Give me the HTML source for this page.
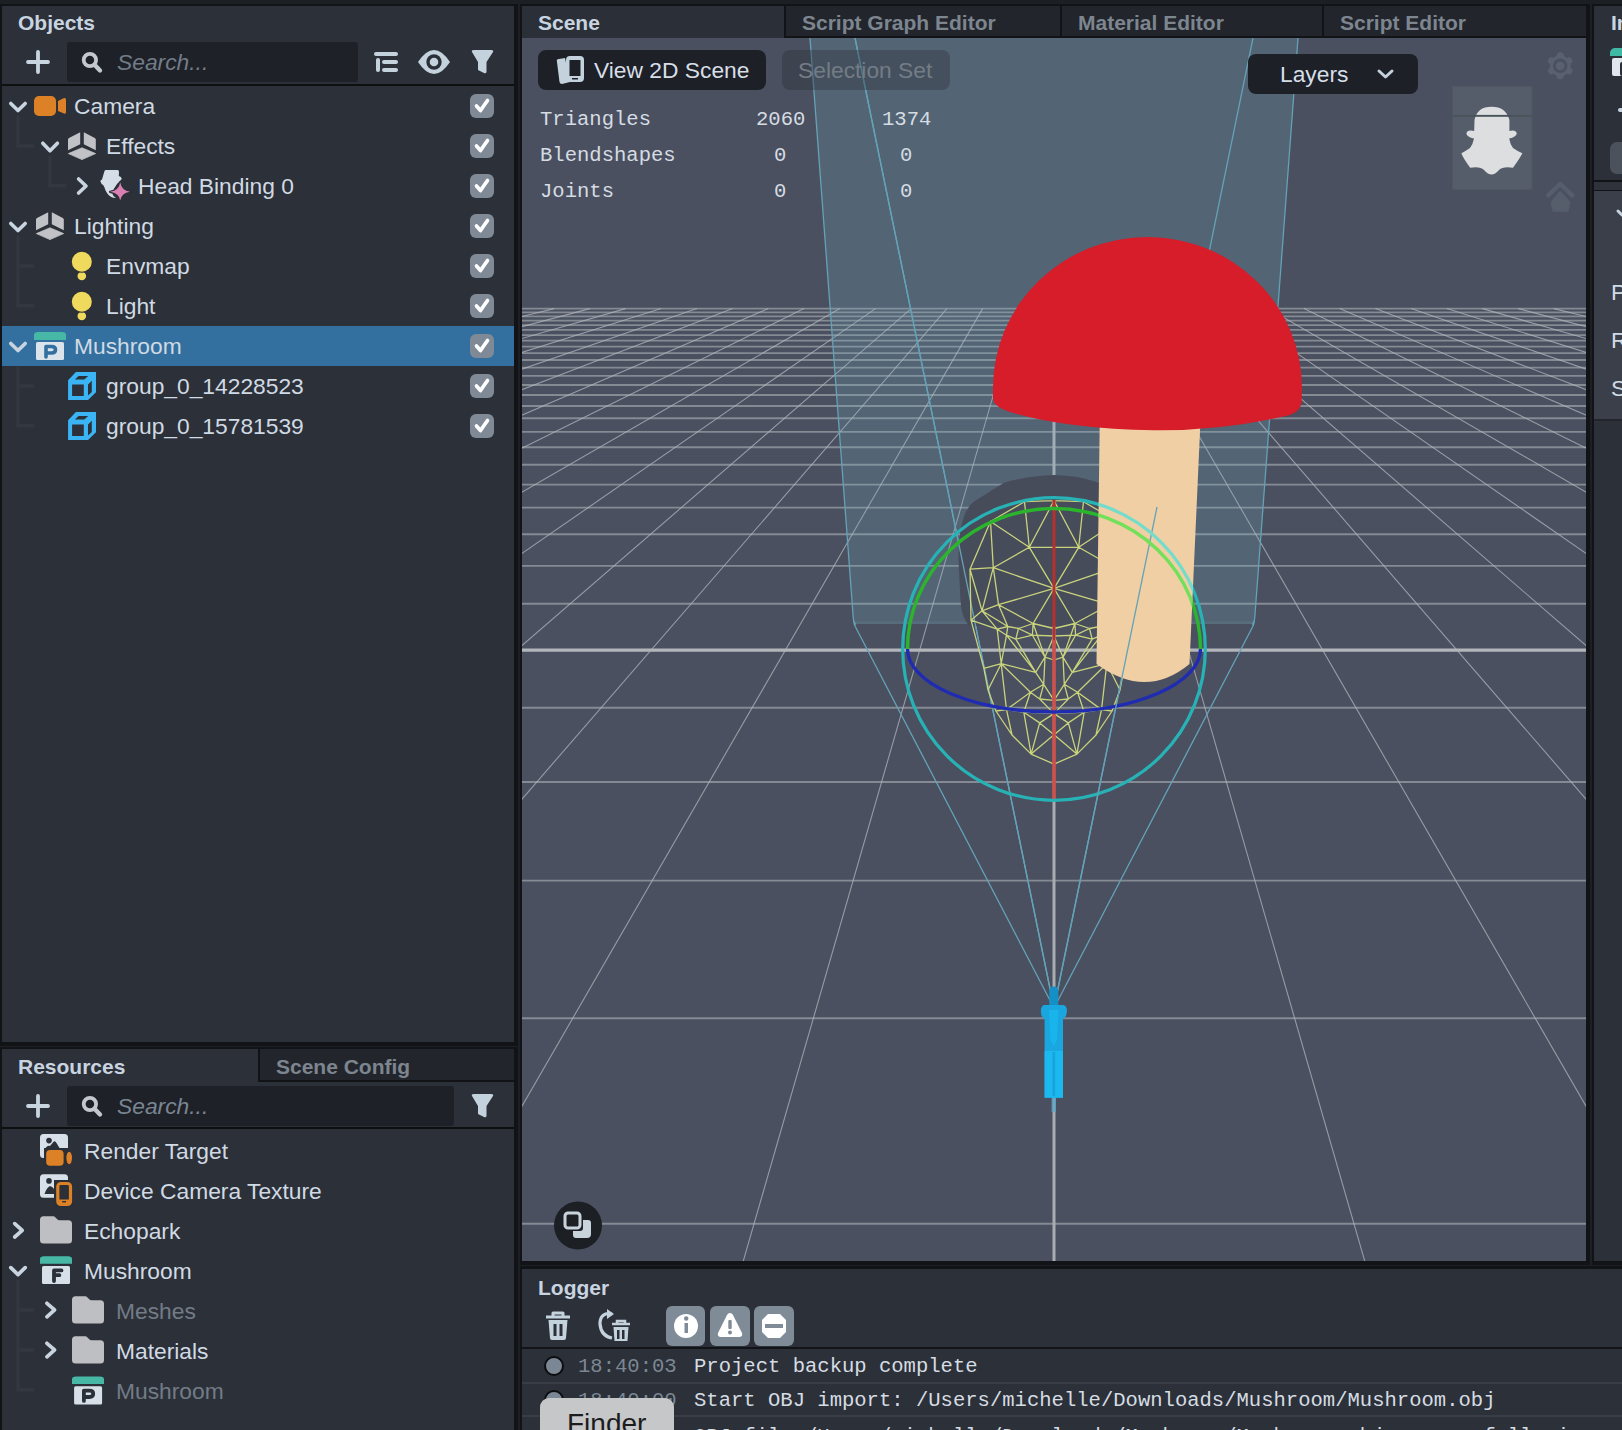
<!DOCTYPE html>
<html><head><meta charset="utf-8">
<style>
*{box-sizing:border-box;margin:0;padding:0}
html,body{width:1622px;height:1430px;overflow:hidden;background:#1c1f23;font-family:"Liberation Sans",sans-serif;}
.abs{position:absolute}
.panel{position:absolute;background:#2c3038;}
.bd{position:absolute;background:#111316}
.t{position:absolute;white-space:pre;color:#d0dae4;font-size:22.8px;line-height:26px}
.hdr{position:absolute;white-space:pre;color:#c8d4e0;font-size:21px;font-weight:bold;line-height:24px;margin-top:1px}
.dim{color:#727c87 !important}
.mono{font-family:"Liberation Mono",monospace}
.cb{position:absolute;left:470px;width:24px;height:24px;border-radius:6px;background:#7f8a96}
svg{position:absolute;overflow:visible}
</style></head><body>

<!-- ===== Objects panel ===== -->
<div class="bd" style="left:0;top:4px;width:518px;height:1042px"></div>
<div class="panel" style="left:2px;top:6px;width:512px;height:1036px"></div>
<div class="hdr" style="left:18px;top:10px">Objects</div>
<!-- toolbar -->
<svg style="left:0;top:0" width="518" height="90">
  <path d="M38,52 V72 M28,62 H48" stroke="#c8d5e0" stroke-width="3.8" stroke-linecap="round"/>
</svg>
<div class="abs" style="left:67px;top:42px;width:291px;height:40px;background:#1e2128;border-radius:3px"></div>
<svg style="left:0;top:0" width="518" height="90">
  <circle cx="89.9" cy="60" r="6.2" fill="none" stroke="#c2c8ce" stroke-width="3.8"/>
  <path d="M95,65.2 L100,70.4" stroke="#c2c8ce" stroke-width="4.4" stroke-linecap="round"/>
  <!-- list icon -->
  <rect x="374" y="52" width="24" height="4" rx="2" fill="#c4d2de"/>
  <rect x="376" y="58" width="4" height="14" rx="2" fill="#c4d2de"/>
  <rect x="382" y="60" width="16" height="4" rx="2" fill="#c4d2de"/>
  <rect x="382" y="68" width="16" height="4" rx="2" fill="#c4d2de"/>
  <!-- eye -->
  <path d="M418,62 Q434,38 450,62 Q434,86 418,62 Z" fill="#c4d2de"/>
  <circle cx="434" cy="62" r="7.7" fill="#2b2f37"/>
  <circle cx="434" cy="62" r="4.3" fill="#c4d2de"/>
  <!-- filter -->
  <path d="M472,52 Q471,50 474,50 L491,50 Q494,50 493,52 L486.5,62 L486.5,72 Q486,74 484,73 L478,70 L478,62 Z" fill="#c4d2de"/>
</svg>
<div class="t dim" style="left:117px;top:49px;font-style:italic;color:#7a8692">Search...</div>
<div class="bd" style="left:2px;top:84px;width:512px;height:2px;background:#0d0f11"></div>

<!-- selected row -->
<div class="abs" style="left:2px;top:326px;width:512px;height:40px;background:#33709f"></div>

<!-- tree lines -->
<svg style="left:0;top:0" width="518" height="460">
  <g stroke="#33373f" stroke-width="3.4" fill="none" stroke-linecap="round">
    <path d="M18,117 V146 H33"/>
    <path d="M50,157 V185.7 H65"/>
    <path d="M18,237 V305.8 H33 M18,266 H33"/>
    <path d="M18,368 V425.8 H33 M18,386 H33"/>
  </g>
</svg>

<!-- rows -->
<svg style="left:0;top:0" width="518" height="460">
  <g stroke="#c8d5e0" stroke-width="3.6" fill="none" stroke-linecap="round" stroke-linejoin="round">
    <path d="M10.8,103.4 L18,110.6 L25.2,103.4"/>
    <path d="M42.8,143.2 L50,150.8 L57.4,143.2"/>
    <path d="M78.6,179 L86,186 L78.6,193"/>
    <path d="M10.8,223.4 L18,230.6 L25.2,223.4"/>
    <path d="M10.8,343.4 L18,350.6 L25.2,343.4"/>
  </g>
  <!-- camera icon -->
  <rect x="34" y="96" width="22" height="20" rx="5" fill="#dd8127"/>
  <path d="M58,101 L64,98 Q66,97.5 66,100 L66,112 Q66,114.5 64,113.5 L58,111 Z" fill="#dd8127"/>
  <!-- effects icon -->
  <path d="M68,139.5 Q68,138.5 69,138 L80.2,132.2 L80.2,144.3 L68,150.2 Z" fill="#c0c2c6" transform="translate(0,0)"/><path d="M95.8,139.5 Q95.8,138.5 94.8,138 L83.8,132.2 L83.8,144.3 L95.8,150.2 Z" fill="#c0c2c6" transform="translate(0,0)"/><path d="M68.4,153.6 L82,147.8 L95.6,153.6 L82,159.6 Z" fill="#c0c2c6" stroke="#c0c2c6" stroke-width="0.8" stroke-linejoin="round" transform="translate(0,0)"/>
  <!-- lighting icon -->
  <path d="M68,139.5 Q68,138.5 69,138 L80.2,132.2 L80.2,144.3 L68,150.2 Z" fill="#c0c2c6" transform="translate(-32,80)"/><path d="M95.8,139.5 Q95.8,138.5 94.8,138 L83.8,132.2 L83.8,144.3 L95.8,150.2 Z" fill="#c0c2c6" transform="translate(-32,80)"/><path d="M68.4,153.6 L82,147.8 L95.6,153.6 L82,159.6 Z" fill="#c0c2c6" stroke="#c0c2c6" stroke-width="0.8" stroke-linejoin="round" transform="translate(-32,80)"/>
  <!-- head binding icon -->
  <path d="M104.5,171 Q104.8,170 106,170 L117.5,170 Q119,170 119,172 L118.8,176 Q121.5,176.5 121.8,179 L117,184 Q113.5,188 112.5,194 Q113,196.5 116,198 Q110,198 107,193 Q105,190 104.5,187.5 L103.2,185 Q101,184 101,182.5 L100.3,181.2 Q100.5,180 102,179.5 Q103,176 104.5,171 Z" fill="#d5dee7"/>
  <path d="M120.2,182.3 Q121.5,190.5 130,191.8 Q121.5,193 120.2,200.5 Q119,193 110,191.8 Q119,190.5 120.2,182.3 Z" fill="#d97fb3" stroke="#2b2f37" stroke-width="2.2" paint-order="stroke" stroke-linejoin="round"/>
  <!-- bulbs -->
  <circle cx="81.8" cy="276" r="4.3" fill="#f0da5e"/>
  <circle cx="81.8" cy="261.8" r="10" fill="#f0da5e" stroke="#2b2f37" stroke-width="1.8" paint-order="stroke"/>
  <circle cx="81.8" cy="316" r="4.3" fill="#f0da5e"/>
  <circle cx="81.8" cy="301.8" r="10" fill="#f0da5e" stroke="#2b2f37" stroke-width="1.8" paint-order="stroke"/>
  <!-- prefab icon -->
  <path d="M34,340 L34,335 Q34,332 38,332 L62,332 Q66,332 66,335 L66,340 Z" fill="#46b8a5"/>
  <rect x="36" y="342" width="28" height="18" rx="1.5" fill="#dce4eb"/>
  <path d="M46,357 V346.5 H51.5 Q55.5,346.5 55.5,349.8 Q55.5,353 51.5,353 H46.5" fill="none" stroke="#33709f" stroke-width="3.6" stroke-linecap="round" stroke-linejoin="round"/>
  <!-- mesh cubes -->
  <path d="M68.1,380.2 L75.9,372 L96,372 L96,392.3 L88,400 L68.1,400 Z M72.1,384.4 L72.1,395.9 L83.8,395.9 L83.8,384.4 Z M74.8,379.6 L84.3,379.6 L88.2,376.1 L78.6,376.1 Z M88,384.4 L88,395.6 L91.8,392 L91.8,380.8 Z M68.1,420.2 L75.9,412 L96,412 L96,432.3 L88,440 L68.1,440 Z M72.1,424.4 L72.1,435.9 L83.8,435.9 L83.8,424.4 Z M74.8,419.6 L84.3,419.6 L88.2,416.1 L78.6,416.1 Z M88,424.4 L88,435.6 L91.8,432 L91.8,420.8 Z" fill="#3ab4f5" fill-rule="evenodd"/>
</svg>
<div class="t" style="left:74px;top:93px">Camera</div>
<div class="t" style="left:106px;top:133px">Effects</div>
<div class="t" style="left:138px;top:173px">Head Binding 0</div>
<div class="t" style="left:74px;top:213px">Lighting</div>
<div class="t" style="left:106px;top:253px">Envmap</div>
<div class="t" style="left:106px;top:293px">Light</div>
<div class="t" style="left:74px;top:333px">Mushroom</div>
<div class="t" style="left:106px;top:373px">group_0_14228523</div>
<div class="t" style="left:106px;top:413px">group_0_15781539</div>
<!-- checkboxes -->
<div class="cb" style="top:94px"></div>
<div class="cb" style="top:134px"></div>
<div class="cb" style="top:174px"></div>
<div class="cb" style="top:214px"></div>
<div class="cb" style="top:254px"></div>
<div class="cb" style="top:294px"></div>
<div class="cb" style="top:334px"></div>
<div class="cb" style="top:374px"></div>
<div class="cb" style="top:414px"></div>
<svg style="left:0;top:0" width="518" height="460">
  <g stroke="#ffffff" stroke-width="3.7" fill="none" stroke-linecap="round" stroke-linejoin="round">
    <path d="M476.5,106 L480.5,110.5 L487.5,100.5"/>
    <path d="M476.5,146 L480.5,150.5 L487.5,140.5"/>
    <path d="M476.5,186 L480.5,190.5 L487.5,180.5"/>
    <path d="M476.5,226 L480.5,230.5 L487.5,220.5"/>
    <path d="M476.5,266 L480.5,270.5 L487.5,260.5"/>
    <path d="M476.5,306 L480.5,310.5 L487.5,300.5"/>
    <path d="M476.5,346 L480.5,350.5 L487.5,340.5"/>
    <path d="M476.5,386 L480.5,390.5 L487.5,380.5"/>
    <path d="M476.5,426 L480.5,430.5 L487.5,420.5"/>
  </g>
</svg>

<!-- ===== Resources panel ===== -->
<div class="bd" style="left:0;top:1047px;width:518px;height:400px"></div>
<div class="panel" style="left:2px;top:1049px;width:512px;height:390px"></div>
<div class="abs" style="left:260px;top:1049px;width:254px;height:33px;background:#22252c"></div>
<div class="bd" style="left:258px;top:1049px;width:2px;height:33px"></div>
<div class="bd" style="left:260px;top:1080px;width:254px;height:2px"></div>
<div class="hdr" style="left:18px;top:1054px">Resources</div>
<div class="hdr" style="left:276px;top:1054px;color:#7d858f">Scene Config</div>
<div class="abs" style="left:67px;top:1086px;width:387px;height:40px;background:#1e2128;border-radius:3px"></div>
<div class="t" style="left:117px;top:1093px;font-style:italic;color:#7a8692">Search...</div>
<div class="bd" style="left:2px;top:1127px;width:512px;height:2px;background:#0d0f11"></div>
<svg style="left:0;top:1040px" width="518" height="390">
  <g transform="translate(0,-1040)">
  <path d="M38,1096 V1116 M28,1106 H48" stroke="#c8d5e0" stroke-width="3.8" stroke-linecap="round"/>
  <circle cx="89.9" cy="1104" r="6.2" fill="none" stroke="#c2c8ce" stroke-width="3.8"/>
  <path d="M95,1109.2 L100,1114.4" stroke="#c2c8ce" stroke-width="4.4" stroke-linecap="round"/>
  <path d="M472,1096 Q471,1094 474,1094 L491,1094 Q494,1094 493,1096 L486.5,1106 L486.5,1116 Q486,1118 484,1117 L478,1114 L478,1106 Z" fill="#c4d2de"/>
  <!-- tree lines -->
  <g stroke="#33373f" stroke-width="3.4" fill="none" stroke-linecap="round">
    <path d="M18,1281 V1389.7 H33 M18,1310 H33 M18,1350 H33"/>
  </g>
  <!-- chevrons -->
  <g stroke="#c8d5e0" stroke-width="3.7" fill="none" stroke-linecap="round" stroke-linejoin="round">
    <path d="M14.7,1223.6 L22.2,1230.4 L14.7,1237"/>
    <path d="M10.8,1267.6 L18,1274.6 L25.2,1267.6"/>
    <path d="M46.9,1303.3 L54.6,1309.8 L46.9,1316.8"/>
    <path d="M46.9,1343.3 L54.6,1349.8 L46.9,1356.8"/>
  </g>
  <!-- render target icon -->
  <path d="M43.5,1134 L64.5,1134 Q68,1134 68,1137.5 L68,1148 L44,1148 L44,1158 L43.5,1158 Q40,1158 40,1154.5 L40,1137.5 Q40,1134 43.5,1134 Z" fill="#d7e0e8"/>
  <circle cx="49" cy="1140.6" r="2.8" fill="#2b2f37"/>
  <path d="M44.5,1150 Q47,1145 50,1146 L52.5,1143 Q54.6,1139.5 56.5,1143 L59.5,1148 L59.5,1150 Z" fill="#2b2f37"/>
  <rect x="44.2" y="1148.2" width="21.4" height="19.6" rx="5" fill="#2b2f37"/>
  <rect x="46.2" y="1150.1" width="17.4" height="15.7" rx="3.8" fill="#dd8127"/>
  <ellipse cx="69.2" cy="1158" rx="3.6" ry="7" fill="#2b2f37"/>
  <ellipse cx="69.2" cy="1158" rx="2.8" ry="6.2" fill="#dd8127"/>
  <!-- device camera texture icon -->
  <path d="M43.5,1174.2 L64.5,1174.2 Q68,1174.2 68,1177.7 L68,1180 L54,1180 L54,1197.7 L43.5,1197.7 Q40,1197.7 40,1194.2 L40,1177.7 Q40,1174.2 43.5,1174.2 Z" fill="#d7e0e8"/>
  <circle cx="49" cy="1180.9" r="2.8" fill="#2b2f37"/>
  <path d="M44.5,1194 Q47,1187 50,1186 Q53,1187 54,1189 L54,1194 Z" fill="#2b2f37"/>
  <rect x="54.3" y="1180" width="19.7" height="28" rx="5" fill="#2b2f37"/>
  <rect x="57.8" y="1183.5" width="12.7" height="21" rx="3" fill="none" stroke="#dd8127" stroke-width="3.2"/>
  <path d="M57.8,1199.5 H70.5 V1201 Q70.5,1204.5 67,1204.5 H61.3 Q57.8,1204.5 57.8,1201 Z" fill="#dd8127"/>
  <rect x="62.2" y="1201" width="3.8" height="1.4" fill="#2b2f37"/>
  <!-- folders -->
  <g fill="#bdbfc3">
    <path d="M40,1219.8 Q40,1216.3 43.5,1216.3 L53,1216.3 Q54.5,1216.3 55.5,1217.5 L57,1219 Q58,1220.3 59.5,1220.3 L68.5,1220.3 Q72,1220.3 72,1223.8 L72,1240.1 Q72,1243.6 68.5,1243.6 L43.5,1243.6 Q40,1243.6 40,1240.1 Z"/>
    <path d="M40,1219.8 Q40,1216.3 43.5,1216.3 L53,1216.3 Q54.5,1216.3 55.5,1217.5 L57,1219 Q58,1220.3 59.5,1220.3 L68.5,1220.3 Q72,1220.3 72,1223.8 L72,1240.1 Q72,1243.6 68.5,1243.6 L43.5,1243.6 Q40,1243.6 40,1240.1 Z" transform="translate(32,80)"/>
    <path d="M40,1219.8 Q40,1216.3 43.5,1216.3 L53,1216.3 Q54.5,1216.3 55.5,1217.5 L57,1219 Q58,1220.3 59.5,1220.3 L68.5,1220.3 Q72,1220.3 72,1223.8 L72,1240.1 Q72,1243.6 68.5,1243.6 L43.5,1243.6 Q40,1243.6 40,1240.1 Z" transform="translate(32,120)"/>
  </g>
  <!-- mushroom F icon -->
  <path d="M40,1263.8 L40,1259 Q40,1256.2 44,1256.2 L68,1256.2 Q72,1256.2 72,1259 L72,1263.8 Z" fill="#46b8a5"/>
  <rect x="42" y="1266" width="28" height="18.1" rx="1.5" fill="#d7e0e8"/>
  <path d="M61.5,1270.4 H54 V1281 M54,1275.2 H59.4" fill="none" stroke="#2b2f37" stroke-width="3.8" stroke-linecap="round" stroke-linejoin="round"/>
  <!-- mushroom P icon -->
  <path d="M72,1384.1 L72,1379.2 Q72,1376.4 76,1376.4 L100,1376.4 Q104,1376.4 104,1379.2 L104,1384.1 Z" fill="#46b8a5"/>
  <rect x="74.1" y="1386.2" width="28" height="18.2" rx="1.5" fill="#d7e0e8"/>
  <path d="M83.9,1400.9 V1390.6 H89.5 Q93.2,1390.6 93.2,1393.8 Q93.2,1397 89.5,1397 H84.4" fill="none" stroke="#2b2f37" stroke-width="3.8" stroke-linecap="round" stroke-linejoin="round"/>
  </g>
</svg>
<div class="t" style="left:84px;top:1138px">Render Target</div>
<div class="t" style="left:84px;top:1178px">Device Camera Texture</div>
<div class="t" style="left:84px;top:1218px">Echopark</div>
<div class="t" style="left:84px;top:1258px">Mushroom</div>
<div class="t dim" style="left:116px;top:1298px">Meshes</div>
<div class="t" style="left:116px;top:1338px">Materials</div>
<div class="t dim" style="left:116px;top:1378px">Mushroom</div>

<!-- ===== Scene panel ===== -->
<div class="bd" style="left:520px;top:4px;width:1070px;height:1261px"></div>
<div class="panel" style="left:522px;top:6px;width:1064px;height:32px;background:#2b2f37"></div>
<div class="abs" style="left:786px;top:6px;width:800px;height:30px;background:#22252c"></div>
<div class="bd" style="left:784px;top:6px;width:2px;height:32px"></div>
<div class="bd" style="left:1060px;top:6px;width:2px;height:32px"></div>
<div class="bd" style="left:1322px;top:6px;width:2px;height:32px"></div>
<div class="bd" style="left:786px;top:36px;width:800px;height:2px"></div>
<div class="hdr" style="left:538px;top:10px">Scene</div>
<div class="hdr" style="left:802px;top:10px;color:#7d858f">Script Graph Editor</div>
<div class="hdr" style="left:1078px;top:10px;color:#7d858f">Material Editor</div>
<div class="hdr" style="left:1340px;top:10px;color:#7d858f">Script Editor</div>

<svg style="left:0;top:0" width="1622" height="1430">
<defs><clipPath id="vp"><rect x="522" y="38" width="1064" height="1223"/></clipPath></defs>
<g clip-path="url(#vp)">
<rect x="522" y="38" width="1064" height="1223" fill="#4a5060"/>
<line x1="522" y1="1223.7" x2="1586" y2="1223.7" stroke="#858a93" stroke-width="1.9"/>
<line x1="522" y1="1018.2" x2="1586" y2="1018.2" stroke="#858a93" stroke-width="1.9"/>
<line x1="522" y1="880.6" x2="1586" y2="880.6" stroke="#858a93" stroke-width="1.9"/>
<line x1="522" y1="782.0" x2="1586" y2="782.0" stroke="#858a93" stroke-width="1.9"/>
<line x1="522" y1="707.8" x2="1586" y2="707.8" stroke="#858a93" stroke-width="1.9"/>
<line x1="522" y1="603.8" x2="1586" y2="603.8" stroke="#858a93" stroke-width="1.9"/>
<line x1="522" y1="565.9" x2="1586" y2="565.9" stroke="#858a93" stroke-width="1.9"/>
<line x1="522" y1="534.3" x2="1586" y2="534.3" stroke="#858a93" stroke-width="1.9"/>
<line x1="522" y1="507.6" x2="1586" y2="507.6" stroke="#858a93" stroke-width="1.9"/>
<line x1="522" y1="484.6" x2="1586" y2="484.6" stroke="#858a93" stroke-width="1.9"/>
<line x1="522" y1="464.7" x2="1586" y2="464.7" stroke="#858a93" stroke-width="1.9"/>
<line x1="522" y1="447.3" x2="1586" y2="447.3" stroke="#858a93" stroke-width="1.9"/>
<line x1="522" y1="431.9" x2="1586" y2="431.9" stroke="#858a93" stroke-width="1.9"/>
<line x1="522" y1="418.2" x2="1586" y2="418.2" stroke="#858a93" stroke-width="1.9"/>
<line x1="522" y1="406.0" x2="1586" y2="406.0" stroke="#858a93" stroke-width="1.9"/>
<line x1="522" y1="395.0" x2="1586" y2="395.0" stroke="#858a93" stroke-width="1.9"/>
<line x1="522" y1="385.0" x2="1586" y2="385.0" stroke="#858a93" stroke-width="1.9"/>
<line x1="522" y1="375.9" x2="1586" y2="375.9" stroke="#858a93" stroke-width="1.9"/>
<line x1="522" y1="367.6" x2="1586" y2="367.6" stroke="#858a93" stroke-width="1.9"/>
<line x1="522" y1="360.0" x2="1586" y2="360.0" stroke="#858a93" stroke-width="1.9"/>
<line x1="522" y1="353.1" x2="1586" y2="353.1" stroke="#858a93" stroke-width="1.9"/>
<line x1="522" y1="346.6" x2="1586" y2="346.6" stroke="#858a93" stroke-width="1.9"/>
<line x1="522" y1="340.6" x2="1586" y2="340.6" stroke="#858a93" stroke-width="1.9"/>
<line x1="522" y1="335.1" x2="1586" y2="335.1" stroke="#858a93" stroke-width="1.9"/>
<line x1="522" y1="329.9" x2="1586" y2="329.9" stroke="#858a93" stroke-width="1.9"/>
<line x1="522" y1="325.1" x2="1586" y2="325.1" stroke="#858a93" stroke-width="1.9"/>
<line x1="522" y1="320.6" x2="1586" y2="320.6" stroke="#858a93" stroke-width="1.9"/>
<line x1="522" y1="316.4" x2="1586" y2="316.4" stroke="#858a93" stroke-width="1.9"/>
<line x1="522" y1="312.4" x2="1586" y2="312.4" stroke="#858a93" stroke-width="1.9"/>
<line x1="522" y1="308.6" x2="1586" y2="308.6" stroke="#858a93" stroke-width="1.9"/>
<line x1="-374.3" y1="308.6" x2="-25181.2" y2="2456.3" stroke="#b4b8be" stroke-width="1.1" stroke-opacity="0.72"/>
<line x1="-338.6" y1="308.6" x2="-24525.3" y2="2456.3" stroke="#b4b8be" stroke-width="1.1" stroke-opacity="0.72"/>
<line x1="-302.9" y1="308.6" x2="-23869.4" y2="2456.3" stroke="#b4b8be" stroke-width="1.1" stroke-opacity="0.72"/>
<line x1="-267.2" y1="308.6" x2="-23213.5" y2="2456.3" stroke="#b4b8be" stroke-width="1.1" stroke-opacity="0.72"/>
<line x1="-231.5" y1="308.6" x2="-22557.7" y2="2456.3" stroke="#b4b8be" stroke-width="1.1" stroke-opacity="0.72"/>
<line x1="-195.8" y1="308.6" x2="-21901.8" y2="2456.3" stroke="#b4b8be" stroke-width="1.1" stroke-opacity="0.72"/>
<line x1="-160.1" y1="308.6" x2="-21245.9" y2="2456.3" stroke="#b4b8be" stroke-width="1.1" stroke-opacity="0.72"/>
<line x1="-124.4" y1="308.6" x2="-20590.0" y2="2456.3" stroke="#b4b8be" stroke-width="1.1" stroke-opacity="0.72"/>
<line x1="-88.7" y1="308.6" x2="-19934.1" y2="2456.3" stroke="#b4b8be" stroke-width="1.1" stroke-opacity="0.72"/>
<line x1="-52.9" y1="308.6" x2="-19278.3" y2="2456.3" stroke="#b4b8be" stroke-width="1.1" stroke-opacity="0.72"/>
<line x1="-17.2" y1="308.6" x2="-18622.4" y2="2456.3" stroke="#b4b8be" stroke-width="1.1" stroke-opacity="0.72"/>
<line x1="18.5" y1="308.6" x2="-17966.5" y2="2456.3" stroke="#b4b8be" stroke-width="1.1" stroke-opacity="0.72"/>
<line x1="54.2" y1="308.6" x2="-17310.6" y2="2456.3" stroke="#b4b8be" stroke-width="1.1" stroke-opacity="0.72"/>
<line x1="89.9" y1="308.6" x2="-16654.7" y2="2456.3" stroke="#b4b8be" stroke-width="1.1" stroke-opacity="0.72"/>
<line x1="125.6" y1="308.6" x2="-15998.9" y2="2456.3" stroke="#b4b8be" stroke-width="1.1" stroke-opacity="0.72"/>
<line x1="161.3" y1="308.6" x2="-15343.0" y2="2456.3" stroke="#b4b8be" stroke-width="1.1" stroke-opacity="0.72"/>
<line x1="197.0" y1="308.6" x2="-14687.1" y2="2456.3" stroke="#b4b8be" stroke-width="1.1" stroke-opacity="0.72"/>
<line x1="232.7" y1="308.6" x2="-14031.2" y2="2456.3" stroke="#b4b8be" stroke-width="1.1" stroke-opacity="0.72"/>
<line x1="268.4" y1="308.6" x2="-13375.3" y2="2456.3" stroke="#b4b8be" stroke-width="1.1" stroke-opacity="0.72"/>
<line x1="304.1" y1="308.6" x2="-12719.5" y2="2456.3" stroke="#b4b8be" stroke-width="1.1" stroke-opacity="0.72"/>
<line x1="339.8" y1="308.6" x2="-12063.6" y2="2456.3" stroke="#b4b8be" stroke-width="1.1" stroke-opacity="0.72"/>
<line x1="375.5" y1="308.6" x2="-11407.7" y2="2456.3" stroke="#b4b8be" stroke-width="1.1" stroke-opacity="0.72"/>
<line x1="411.3" y1="308.6" x2="-10751.8" y2="2456.3" stroke="#b4b8be" stroke-width="1.1" stroke-opacity="0.72"/>
<line x1="447.0" y1="308.6" x2="-10095.9" y2="2456.3" stroke="#b4b8be" stroke-width="1.1" stroke-opacity="0.72"/>
<line x1="482.7" y1="308.6" x2="-9440.1" y2="2456.3" stroke="#b4b8be" stroke-width="1.1" stroke-opacity="0.72"/>
<line x1="518.4" y1="308.6" x2="-8784.2" y2="2456.3" stroke="#b4b8be" stroke-width="1.1" stroke-opacity="0.72"/>
<line x1="554.1" y1="308.6" x2="-8128.3" y2="2456.3" stroke="#b4b8be" stroke-width="1.1" stroke-opacity="0.72"/>
<line x1="589.8" y1="308.6" x2="-7472.4" y2="2456.3" stroke="#b4b8be" stroke-width="1.1" stroke-opacity="0.72"/>
<line x1="625.5" y1="308.6" x2="-6816.6" y2="2456.3" stroke="#b4b8be" stroke-width="1.1" stroke-opacity="0.72"/>
<line x1="661.2" y1="308.6" x2="-6160.7" y2="2456.3" stroke="#b4b8be" stroke-width="1.1" stroke-opacity="0.72"/>
<line x1="696.9" y1="308.6" x2="-5504.8" y2="2456.3" stroke="#b4b8be" stroke-width="1.1" stroke-opacity="0.72"/>
<line x1="732.6" y1="308.6" x2="-4848.9" y2="2456.3" stroke="#b4b8be" stroke-width="1.1" stroke-opacity="0.72"/>
<line x1="768.3" y1="308.6" x2="-4193.0" y2="2456.3" stroke="#b4b8be" stroke-width="1.1" stroke-opacity="0.72"/>
<line x1="804.0" y1="308.6" x2="-3537.2" y2="2456.3" stroke="#b4b8be" stroke-width="1.1" stroke-opacity="0.72"/>
<line x1="839.8" y1="308.6" x2="-2881.3" y2="2456.3" stroke="#b4b8be" stroke-width="1.1" stroke-opacity="0.72"/>
<line x1="875.5" y1="308.6" x2="-2225.4" y2="2456.3" stroke="#b4b8be" stroke-width="1.1" stroke-opacity="0.72"/>
<line x1="911.2" y1="308.6" x2="-1569.5" y2="2456.3" stroke="#b4b8be" stroke-width="1.1" stroke-opacity="0.72"/>
<line x1="946.9" y1="308.6" x2="-913.6" y2="2456.3" stroke="#b4b8be" stroke-width="1.1" stroke-opacity="0.72"/>
<line x1="982.6" y1="308.6" x2="-257.8" y2="2456.3" stroke="#b4b8be" stroke-width="1.1" stroke-opacity="0.72"/>
<line x1="1018.3" y1="308.6" x2="398.1" y2="2456.3" stroke="#b4b8be" stroke-width="1.1" stroke-opacity="0.72"/>
<line x1="1089.7" y1="308.6" x2="1709.9" y2="2456.3" stroke="#b4b8be" stroke-width="1.1" stroke-opacity="0.72"/>
<line x1="1125.4" y1="308.6" x2="2365.8" y2="2456.3" stroke="#b4b8be" stroke-width="1.1" stroke-opacity="0.72"/>
<line x1="1161.1" y1="308.6" x2="3021.6" y2="2456.3" stroke="#b4b8be" stroke-width="1.1" stroke-opacity="0.72"/>
<line x1="1196.8" y1="308.6" x2="3677.5" y2="2456.3" stroke="#b4b8be" stroke-width="1.1" stroke-opacity="0.72"/>
<line x1="1232.5" y1="308.6" x2="4333.4" y2="2456.3" stroke="#b4b8be" stroke-width="1.1" stroke-opacity="0.72"/>
<line x1="1268.2" y1="308.6" x2="4989.3" y2="2456.3" stroke="#b4b8be" stroke-width="1.1" stroke-opacity="0.72"/>
<line x1="1304.0" y1="308.6" x2="5645.2" y2="2456.3" stroke="#b4b8be" stroke-width="1.1" stroke-opacity="0.72"/>
<line x1="1339.7" y1="308.6" x2="6301.0" y2="2456.3" stroke="#b4b8be" stroke-width="1.1" stroke-opacity="0.72"/>
<line x1="1375.4" y1="308.6" x2="6956.9" y2="2456.3" stroke="#b4b8be" stroke-width="1.1" stroke-opacity="0.72"/>
<line x1="1411.1" y1="308.6" x2="7612.8" y2="2456.3" stroke="#b4b8be" stroke-width="1.1" stroke-opacity="0.72"/>
<line x1="1446.8" y1="308.6" x2="8268.7" y2="2456.3" stroke="#b4b8be" stroke-width="1.1" stroke-opacity="0.72"/>
<line x1="1482.5" y1="308.6" x2="8924.6" y2="2456.3" stroke="#b4b8be" stroke-width="1.1" stroke-opacity="0.72"/>
<line x1="1518.2" y1="308.6" x2="9580.4" y2="2456.3" stroke="#b4b8be" stroke-width="1.1" stroke-opacity="0.72"/>
<line x1="1553.9" y1="308.6" x2="10236.3" y2="2456.3" stroke="#b4b8be" stroke-width="1.1" stroke-opacity="0.72"/>
<line x1="1589.6" y1="308.6" x2="10892.2" y2="2456.3" stroke="#b4b8be" stroke-width="1.1" stroke-opacity="0.72"/>
<line x1="1625.3" y1="308.6" x2="11548.1" y2="2456.3" stroke="#b4b8be" stroke-width="1.1" stroke-opacity="0.72"/>
<line x1="1661.0" y1="308.6" x2="12203.9" y2="2456.3" stroke="#b4b8be" stroke-width="1.1" stroke-opacity="0.72"/>
<line x1="1696.7" y1="308.6" x2="12859.8" y2="2456.3" stroke="#b4b8be" stroke-width="1.1" stroke-opacity="0.72"/>
<line x1="1732.5" y1="308.6" x2="13515.7" y2="2456.3" stroke="#b4b8be" stroke-width="1.1" stroke-opacity="0.72"/>
<line x1="1768.2" y1="308.6" x2="14171.6" y2="2456.3" stroke="#b4b8be" stroke-width="1.1" stroke-opacity="0.72"/>
<line x1="1803.9" y1="308.6" x2="14827.5" y2="2456.3" stroke="#b4b8be" stroke-width="1.1" stroke-opacity="0.72"/>
<line x1="1839.6" y1="308.6" x2="15483.3" y2="2456.3" stroke="#b4b8be" stroke-width="1.1" stroke-opacity="0.72"/>
<line x1="1875.3" y1="308.6" x2="16139.2" y2="2456.3" stroke="#b4b8be" stroke-width="1.1" stroke-opacity="0.72"/>
<line x1="1911.0" y1="308.6" x2="16795.1" y2="2456.3" stroke="#b4b8be" stroke-width="1.1" stroke-opacity="0.72"/>
<line x1="1946.7" y1="308.6" x2="17451.0" y2="2456.3" stroke="#b4b8be" stroke-width="1.1" stroke-opacity="0.72"/>
<line x1="1982.4" y1="308.6" x2="18106.9" y2="2456.3" stroke="#b4b8be" stroke-width="1.1" stroke-opacity="0.72"/>
<line x1="2018.1" y1="308.6" x2="18762.7" y2="2456.3" stroke="#b4b8be" stroke-width="1.1" stroke-opacity="0.72"/>
<line x1="2053.8" y1="308.6" x2="19418.6" y2="2456.3" stroke="#b4b8be" stroke-width="1.1" stroke-opacity="0.72"/>
<line x1="2089.5" y1="308.6" x2="20074.5" y2="2456.3" stroke="#b4b8be" stroke-width="1.1" stroke-opacity="0.72"/>
<line x1="2125.2" y1="308.6" x2="20730.4" y2="2456.3" stroke="#b4b8be" stroke-width="1.1" stroke-opacity="0.72"/>
<line x1="2160.9" y1="308.6" x2="21386.3" y2="2456.3" stroke="#b4b8be" stroke-width="1.1" stroke-opacity="0.72"/>
<line x1="2196.7" y1="308.6" x2="22042.1" y2="2456.3" stroke="#b4b8be" stroke-width="1.1" stroke-opacity="0.72"/>
<line x1="2232.4" y1="308.6" x2="22698.0" y2="2456.3" stroke="#b4b8be" stroke-width="1.1" stroke-opacity="0.72"/>
<line x1="2268.1" y1="308.6" x2="23353.9" y2="2456.3" stroke="#b4b8be" stroke-width="1.1" stroke-opacity="0.72"/>
<line x1="2303.8" y1="308.6" x2="24009.8" y2="2456.3" stroke="#b4b8be" stroke-width="1.1" stroke-opacity="0.72"/>
<line x1="2339.5" y1="308.6" x2="24665.7" y2="2456.3" stroke="#b4b8be" stroke-width="1.1" stroke-opacity="0.72"/>
<line x1="2375.2" y1="308.6" x2="25321.5" y2="2456.3" stroke="#b4b8be" stroke-width="1.1" stroke-opacity="0.72"/>
<line x1="2410.9" y1="308.6" x2="25977.4" y2="2456.3" stroke="#b4b8be" stroke-width="1.1" stroke-opacity="0.72"/>
<line x1="2446.6" y1="308.6" x2="26633.3" y2="2456.3" stroke="#b4b8be" stroke-width="1.1" stroke-opacity="0.72"/>
<line x1="2482.3" y1="308.6" x2="27289.2" y2="2456.3" stroke="#b4b8be" stroke-width="1.1" stroke-opacity="0.72"/>
<line x1="522" y1="650.1" x2="1586" y2="650.1" stroke="#b2b5ba" stroke-width="3.2"/>
<line x1="1054" y1="308.6" x2="1054" y2="1262" stroke="#a9acb1" stroke-width="3"/>
<polygon points="810,38 1298,38 1254,624 854,624" fill="rgb(120,180,200)" fill-opacity="0.2"/>
<path d="M810,38 L853.2,617 Q853.6,623 856,624.5 M1298,38 L1254.8,617 Q1254.4,623 1252,624.5" fill="none" stroke="#64a2b8" stroke-width="1.3"/>
<rect x="855" y="621.5" width="398" height="2.5" fill="rgb(120,180,200)" fill-opacity="0.12"/>
<path d="M1054,1008 L856,628 Q854,624.5 853.6,621" fill="none" stroke="#64a2b8" stroke-width="1.3"/>
<path d="M1054,1008 L1252,628 Q1254,624.5 1254.4,621" fill="none" stroke="#64a2b8" stroke-width="1.3"/>
<line x1="1054" y1="1008" x2="855" y2="38" stroke="#64a2b8" stroke-width="1.3"/>
<line x1="1054" y1="1008" x2="1253" y2="38" stroke="#64a2b8" stroke-width="1.3"/>
<path d="M967.6,624 Q961,615 960.5,600 L958.5,560 Q958.5,530 965,514 Q969,505 974,501.5 L1004,482.7 Q1028,476 1054.5,475.1 Q1078,475.5 1098.5,482.7 L1148,500 L1148,626 L968,626 Z" fill="#474c5b"/>
<line x1="1054" y1="1008" x2="855" y2="38" stroke="#64a2b8" stroke-width="1.3"/>
<path d="M1054.0,500.6L1024.5,501.7M1054.0,500.6L1083.5,501.7M1024.5,501.7L990.5,521.5M1083.5,501.7L1117.5,521.5M1024.5,501.7L1029.3,547.3M1083.5,501.7L1078.7,547.3M1054.0,500.6L1029.3,547.3M1054.0,500.6L1078.7,547.3M990.5,521.5L1029.3,547.3M1117.5,521.5L1078.7,547.3M990.5,521.5L970.0,569.2M1117.5,521.5L1138.0,569.2M990.5,521.5L993.3,567.7M1117.5,521.5L1114.7,567.7M1029.3,547.3L993.3,567.7M1078.7,547.3L1114.7,567.7M970.0,569.2L993.3,567.7M1138.0,569.2L1114.7,567.7M1029.3,547.3L1054.0,588.4M1078.7,547.3L1054.0,588.4M993.3,567.7L1054.0,588.4M1114.7,567.7L1054.0,588.4M970.0,569.2L982.0,610.8M1138.0,569.2L1126.0,610.8M993.3,567.7L982.0,610.8M1114.7,567.7L1126.0,610.8M993.3,567.7L998.5,604.7M1114.7,567.7L1109.5,604.7M982.0,610.8L998.5,604.7M1126.0,610.8L1109.5,604.7M998.5,604.7L1054.0,588.4M1109.5,604.7L1054.0,588.4M970.0,569.2L971.0,620.2M1138.0,569.2L1137.0,620.2M982.0,610.8L971.0,620.2M1126.0,610.8L1137.0,620.2M1054.0,588.4L1033.1,623.5M1054.0,588.4L1074.9,623.5M998.5,604.7L1033.1,623.5M1109.5,604.7L1074.9,623.5M1054.0,588.4L1054.0,628.5M1054.0,588.4L1054.0,628.5M982.0,610.8L997.2,629.2M1126.0,610.8L1110.8,629.2M997.2,629.2L1006.5,635.2M1110.8,629.2L1101.5,635.2M1006.5,635.2L1015.8,639.2M1101.5,635.2L1092.2,639.2M1015.8,639.2L1032.4,635.2M1092.2,639.2L1075.6,635.2M1032.4,635.2L1033.1,623.5M1075.6,635.2L1074.9,623.5M998.5,604.7L1007.8,626.5M1109.5,604.7L1100.2,626.5M1007.8,626.5L1018.5,628.5M1100.2,626.5L1089.5,628.5M1018.5,628.5L1033.1,623.5M1089.5,628.5L1074.9,623.5M982.0,610.8L1007.8,626.5M1126.0,610.8L1100.2,626.5M997.2,629.2L1007.8,626.5M1110.8,629.2L1100.2,626.5M1007.8,626.5L1006.5,635.2M1100.2,626.5L1101.5,635.2M1018.5,628.5L1015.8,639.2M1089.5,628.5L1092.2,639.2M1018.5,628.5L1032.4,635.2M1089.5,628.5L1075.6,635.2M1033.1,623.5L1054.0,628.5M1074.9,623.5L1054.0,628.5M1032.4,635.2L1054.0,636.0M1075.6,635.2L1054.0,636.0M1054.0,628.5L1054.0,636.0M1054.0,628.5L1054.0,636.0M971.0,620.2L983.9,668.4M1137.0,620.2L1124.1,668.4M971.0,620.2L997.2,629.2M1137.0,620.2L1110.8,629.2M997.2,629.2L1001.2,663.7M1110.8,629.2L1106.8,663.7M1006.5,635.2L1001.2,663.7M1101.5,635.2L1106.8,663.7M1015.8,639.2L1035.7,672.4M1092.2,639.2L1072.3,672.4M1032.4,635.2L1045.0,657.1M1075.6,635.2L1063.0,657.1M1054.0,636.0L1045.0,657.1M1054.0,636.0L1063.0,657.1M1045.0,657.1L1035.7,672.4M1063.0,657.1L1072.3,672.4M1045.0,657.1L1043.7,684.3M1063.0,657.1L1064.3,684.3M1035.7,672.4L1043.7,684.3M1072.3,672.4L1064.3,684.3M1001.2,663.7L983.9,668.4M1106.8,663.7L1124.1,668.4M1001.2,663.7L1035.7,672.4M1106.8,663.7L1072.3,672.4M1001.2,663.7L1030.4,692.3M1106.8,663.7L1077.6,692.3M983.9,668.4L988.0,690.0M1124.1,668.4L1120.0,690.0M1001.2,663.7L988.0,690.0M1106.8,663.7L1120.0,690.0M988.0,690.0L995.9,711.0M1120.0,690.0L1112.1,711.0M1045.0,657.1L1054.0,660.0M1063.0,657.1L1054.0,660.0M1043.7,684.3L1030.4,692.3M1064.3,684.3L1077.6,692.3M1043.7,684.3L1039.7,699.0M1064.3,684.3L1068.3,699.0M1030.4,692.3L1039.7,699.0M1077.6,692.3L1068.3,699.0M1039.7,699.0L1054.0,700.3M1068.3,699.0L1054.0,700.3M1043.7,684.3L1054.0,700.3M1064.3,684.3L1054.0,700.3M1030.4,692.3L1023.8,712.2M1077.6,692.3L1084.2,712.2M1023.8,712.2L1054.0,713.6M1084.2,712.2L1054.0,713.6M1039.7,699.0L1054.0,713.6M1068.3,699.0L1054.0,713.6M1001.2,663.7L1006.5,709.6M1106.8,663.7L1101.5,709.6M1030.4,692.3L1006.5,709.6M1077.6,692.3L1101.5,709.6M1006.5,709.6L1023.8,712.2M1101.5,709.6L1084.2,712.2M995.9,711.0L1006.5,709.6M1112.1,711.0L1101.5,709.6M995.9,711.0L1012.0,735.0M1112.1,711.0L1096.0,735.0M1006.5,709.6L1012.0,735.0M1101.5,709.6L1096.0,735.0M1012.0,735.0L1031.1,754.1M1096.0,735.0L1076.9,754.1M1023.8,712.2L1031.1,754.1M1084.2,712.2L1076.9,754.1M1023.8,712.2L1039.7,722.9M1084.2,712.2L1068.3,722.9M1039.7,722.9L1054.0,713.6M1068.3,722.9L1054.0,713.6M1039.7,722.9L1054.0,734.8M1068.3,722.9L1054.0,734.8M1039.7,722.9L1031.1,754.1M1068.3,722.9L1076.9,754.1M1031.1,754.1L1054.0,734.8M1076.9,754.1L1054.0,734.8M1031.1,754.1L1054.0,764.1M1076.9,754.1L1054.0,764.1M1006.5,635.2L1035.7,672.4M1101.5,635.2L1072.3,672.4M1033.1,623.5L1045.0,657.1M1074.9,623.5L1063.0,657.1M1029.3,547.3L1078.7,547.3M1030.4,692.3L1039.7,699.0" stroke="#c9d37c" stroke-width="1.3" fill="none" stroke-linecap="round"/>
<line x1="1054" y1="500" x2="1054" y2="800" stroke="#b8302e" stroke-width="3"/>
<line x1="1054" y1="640" x2="1054" y2="800" stroke="#d0504c" stroke-width="3"/>
<path d="M907.5,649 A146.5,140.5 0 0 1 1200.5,649" fill="none" stroke="#2ab52c" stroke-width="3.4"/>
<path d="M907.5,649 A146.5,63 0 0 0 1200.5,649" fill="none" stroke="#1f2cb2" stroke-width="3.4"/>
<circle cx="1054" cy="649" r="151.3" fill="none" stroke="#27b3b6" stroke-width="3.2"/>
<path d="M1099.7,425 L1200.3,425 L1189.5,664 Q1146,700 1096.5,664 Z" fill="#efcfa3"/>
<line x1="1157" y1="507" x2="1054" y2="1008" stroke="#64a2b8" stroke-width="1.3"/>
<clipPath id="stemclip"><path d="M1099.7,425 L1200.3,425 L1189.5,664 Q1146,700 1096.5,664 Z"/></clipPath>
<g clip-path="url(#stemclip)">
<path d="M907.5,649 A146.5,140.5 0 0 1 1200.5,649" fill="none" stroke="#72e05a" stroke-width="3.4"/>
<circle cx="1054" cy="649" r="151.3" fill="none" stroke="#74dccb" stroke-width="3.2"/>
</g>
<path d="M993,388 A154.5,151 0 0 1 1302,388 L1301.6,402 Q1301,410.5 1290,415 Q1222,431 1154,430.2 Q1062,428.5 1007,411 Q993,406 993,398 Z" fill="#d71c2a"/>
<rect x="1051.5" y="1096" width="4.5" height="16" fill="#5aa6c8" opacity="0.7"/>
<path d="M1049.3,1007 L1049.3,991 Q1049.5,986.5 1053.8,986.5 Q1058,986.5 1058.3,991 L1058.3,1007 Z" fill="#1590c6"/>
<path d="M1044,1005 L1063.5,1005 Q1067,1006 1067,1011 L1066,1016 L1063,1019 L1063,1097.7 L1044.6,1097.7 L1044.6,1019 L1041.5,1016 L1040.8,1011 Q1041,1006 1044,1005 Z" fill="#1aa6de"/>
<rect x="1044.6" y="1050.8" width="18.4" height="46.9" fill="#1cb8f0"/>
<path d="M1049,1010 L1058.5,1010 L1057,1040 L1054,1046 L1050.5,1040 Z" fill="#1ab4ec"/>
<rect x="1052.5" y="1052" width="2.6" height="44" fill="#189fd4" opacity="0.8"/>
</g>
</svg>

<!-- viewport overlays -->
<div class="abs" style="left:538px;top:50px;width:228px;height:40px;background:#1d2027;border-radius:8px"></div>
<svg style="left:0;top:0" width="800" height="100">
  <path d="M557,62 Q556,59 559,59 L565,58 L570,82 L562,84 Q560,84 559.5,82 Z" fill="#c4d2de"/>
  <rect x="566" y="56" width="18" height="26" rx="4" fill="#c4d2de"/>
  <rect x="569.5" y="60" width="11" height="16" fill="#1d2027"/>
  <rect x="572" y="78" width="6" height="1.5" fill="#1d2027"/>
</svg>
<div class="t" style="left:594px;top:57px;color:#d7dee6">View 2D Scene</div>
<div class="abs" style="left:782px;top:50px;width:168px;height:40px;background:rgba(40,44,52,0.35);border-radius:8px"></div>
<div class="t" style="left:798px;top:57px;color:#737c86">Selection Set</div>
<div class="abs" style="left:1248px;top:54px;width:170px;height:40px;background:#1d2027;border-radius:8px"></div>
<div class="t" style="left:1280px;top:61px;color:#d7dee6">Layers</div>
<svg style="left:0;top:0" width="1622" height="260">
  <path d="M1379,71 L1385.5,77 L1392,71" stroke="#c4d2de" stroke-width="3" fill="none" stroke-linecap="round" stroke-linejoin="round"/>
  <!-- gear -->
  <g transform="translate(1560.2,65.8)" fill="#596170">
    <circle r="10.5"/>
    <g stroke="#596170" stroke-width="7" stroke-linecap="round">
      <path d="M0,-10 V10"/>
      <path d="M0,-10 V10" transform="rotate(60)"/>
      <path d="M0,-10 V10" transform="rotate(120)"/>
    </g>
    <circle r="7.2" fill="#4a5060"/>
    <circle r="4.4"/>
  </g>
  <!-- snap box -->
  <rect x="1452.5" y="86.5" width="79.5" height="103.2" fill="#565d6a" stroke="#4f5862" stroke-width="1"/>
  <path d="M1491.6,106.7 Q1477,106.7 1474.5,120 L1474.2,131 Q1467,129.5 1466.4,133.5 Q1467,137 1474,138.5 Q1473,144 1470,148 Q1465,151.5 1461.4,153.2 Q1463,158 1470.2,167.7 Q1480,166 1484,170 Q1488,174.6 1491.6,174.6 Q1495,174.6 1499,170 Q1503,166 1513,167.7 Q1520,158 1522.4,153.2 Q1518,151.5 1513,148 Q1510,144 1509.2,138.5 Q1516,137 1516.8,133.5 Q1516,129.5 1509.4,131 L1509.4,120 Q1506,106.7 1491.6,106.7 Z" fill="#dcdedf"/>
  <rect x="1452.5" y="114.9" width="79.5" height="1.9" fill="#49535a"/>
  <!-- house -->
  <path d="M1548.2,195.4 L1560.2,184 L1572.2,195.4" fill="none" stroke="#565e6c" stroke-width="4.4" stroke-linecap="round" stroke-linejoin="round"/>
  <path d="M1560.2,191.6 L1569.6,202.3 L1567.7,211.1 L1553.3,211.1 L1551.4,202.3 Z" fill="#565e6c" stroke="#565e6c" stroke-width="1.5" stroke-linejoin="round"/>
</svg>
<!-- stats -->
<div class="t mono" style="left:540px;top:107px;font-size:20.55px;color:#d5dce3">Triangles</div>
<div class="t mono" style="left:540px;top:143px;font-size:20.55px;color:#d5dce3">Blendshapes</div>
<div class="t mono" style="left:540px;top:179px;font-size:20.55px;color:#d5dce3">Joints</div>
<div class="t mono" style="left:756px;top:107px;font-size:20.55px;color:#d5dce3">2060</div>
<div class="t mono" style="left:774px;top:143px;font-size:20.55px;color:#d5dce3">0</div>
<div class="t mono" style="left:774px;top:179px;font-size:20.55px;color:#d5dce3">0</div>
<div class="t mono" style="left:882px;top:107px;font-size:20.55px;color:#d5dce3">1374</div>
<div class="t mono" style="left:900px;top:143px;font-size:20.55px;color:#d5dce3">0</div>
<div class="t mono" style="left:900px;top:179px;font-size:20.55px;color:#d5dce3">0</div>
<!-- bottom-left 2D icon -->
<svg style="left:0;top:1180px" width="700" height="90">
  <circle cx="578" cy="45.5" r="24" fill="#1c1f24"/>
  <rect x="565" y="33" width="15" height="15" rx="3" fill="none" stroke="#c9d3dc" stroke-width="3"/>
  <path d="M583,40 L588,40 Q591,40 591,43 L591,54 Q591,58 587,58 L576,58 Q573,58 573,55 L573,51 L580,51 Q583,51 583,48 Z" fill="#c9d3dc"/>
</svg>

<!-- ===== Inspector (right) ===== -->
<div class="bd" style="left:1592px;top:4px;width:40px;height:1261px"></div>
<div class="panel" style="left:1594px;top:6px;width:40px;height:1255px"></div>
<div class="hdr" style="left:1611px;top:10px">Inspector</div>
<div class="abs" style="left:1610px;top:48px;width:20px;height:8px;background:#3fb9a3;border-radius:5px 0 0 0"></div>
<div class="abs" style="left:1612px;top:58px;width:20px;height:18px;background:#dfe6ec;border-radius:2px"></div>
<div class="abs" style="left:1619.5px;top:61.5px;width:4px;height:14px;background:#2c3038;border-radius:2px"></div>
<div class="abs" style="left:1618px;top:108px;width:10px;height:4px;background:#c8d5e0;border-radius:2px"></div>
<div class="abs" style="left:1610px;top:142px;width:30px;height:32px;background:#4b525c;border-radius:7px"></div>
<div class="bd" style="left:1594px;top:180px;width:30px;height:2px"></div>
<div class="abs" style="left:1594px;top:182px;width:30px;height:8px;background:#2e323a"></div>
<div class="bd" style="left:1594px;top:190px;width:30px;height:1px"></div>
<div class="abs" style="left:1594px;top:191px;width:30px;height:228px;background:#3a3f49"></div>
<svg style="left:1590px;top:200px" width="32" height="30"><path d="M28,11 L32,15" stroke="#c8d5e0" stroke-width="3" stroke-linecap="round"/></svg>
<div class="t" style="left:1611px;top:279px">Position</div>
<div class="t" style="left:1611px;top:327px">Rotation</div>
<div class="t" style="left:1611px;top:375px">Scale</div>
<div class="bd" style="left:1594px;top:419px;width:30px;height:2px;background:#22252b"></div>

<!-- ===== Logger ===== -->
<div class="bd" style="left:520px;top:1266px;width:1110px;height:170px"></div>
<div class="panel" style="left:522px;top:1269px;width:1100px;height:170px"></div>
<div class="hdr" style="left:538px;top:1275px">Logger</div>
<svg style="left:0;top:1290px" width="1622" height="140">
  <g transform="translate(0,-1290)">
  <!-- trash -->
  <path d="M546,1317 H570 M553,1317 V1313 H563 V1317" stroke="#c4d2de" stroke-width="3" fill="none" stroke-linejoin="round"/>
  <path d="M548.5,1320 H567.5 L566,1338 Q566,1340 564,1340 H552 Q550,1340 550,1338 Z" fill="#c4d2de"/>
  <rect x="553.5" y="1324" width="3" height="12" fill="#2b2f37"/>
  <rect x="559.5" y="1324" width="3" height="12" fill="#2b2f37"/>
  <!-- reload trash -->
  <path d="M612,1314 Q600,1312 600,1324 Q601,1336 612,1338" stroke="#c4d2de" stroke-width="3.2" fill="none"/>
  <path d="M607,1309 L614,1314 L607,1319 Z" fill="#c4d2de"/>
  <path d="M612,1324 H630 M617,1324 V1321 H625 V1324" stroke="#c4d2de" stroke-width="2.5" fill="none"/>
  <path d="M613.5,1327 H628.5 L627.5,1341 H614.5 Z" fill="#c4d2de"/>
  <rect x="617" y="1330" width="2.5" height="9" fill="#2b2f37"/>
  <rect x="622" y="1330" width="2.5" height="9" fill="#2b2f37"/>
  <!-- buttons -->
  <rect x="666" y="1306" width="39" height="40" rx="6" fill="#7f8b97"/>
  <rect x="710" y="1306" width="40" height="40" rx="6" fill="#7f8b97"/>
  <rect x="754" y="1306" width="40" height="40" rx="6" fill="#7f8b97"/>
  <circle cx="686" cy="1326" r="12" fill="#fff"/>
  <rect x="684.5" y="1323" width="3.5" height="10" fill="#7f8b97"/>
  <circle cx="686.2" cy="1318.5" r="2.2" fill="#7f8b97"/>
  <path d="M730,1313 Q732,1313 733,1315 L742,1333 Q743,1337 739,1337 L721,1337 Q717,1337 718,1333 L727,1315 Q728,1313 730,1313 Z" fill="#fff"/>
  <rect x="728.3" y="1320" width="3.4" height="9" rx="1" fill="#7f8b97"/>
  <circle cx="730" cy="1332.5" r="2" fill="#7f8b97"/>
  <path d="M768,1314 L780,1314 L786,1320 L786,1332 L780,1338 L768,1338 L762,1332 L762,1320 Z" fill="#fff"/>
  <rect x="765" y="1324" width="18" height="4" fill="#7f8b97"/>
  </g>
</svg>
<div class="bd" style="left:522px;top:1347px;width:1100px;height:2px;background:#121417"></div>
<div class="abs" style="left:522px;top:1382px;width:1100px;height:2px;background:#383d46"></div>
<div class="abs" style="left:522px;top:1415px;width:1100px;height:2px;background:#383d46"></div>
<svg style="left:520px;top:1350px" width="60" height="80">
  <circle cx="34" cy="16" r="9" fill="#7b8794" stroke="#0c0d0f" stroke-width="2"/>
  <circle cx="34" cy="50" r="9" fill="#7b8794" stroke="#0c0d0f" stroke-width="2"/>
</svg>
<div class="t mono" style="left:578px;top:1354px;font-size:20.55px;color:#7b8894">18:40:03</div>
<div class="t mono" style="left:694px;top:1354px;font-size:20.55px;color:#d5dce3">Project backup complete</div>
<div class="t mono" style="left:578px;top:1388px;font-size:20.55px;color:#7b8894">18:40:00</div>
<div class="t mono" style="left:694px;top:1388px;font-size:20.55px;color:#d5dce3">Start OBJ import: /Users/michelle/Downloads/Mushroom/Mushroom.obj</div>
<div class="t mono" style="left:694px;top:1424px;font-size:20.55px;color:#d5dce3">OBJ file /Users/michelle/Downloads/Mushroom/Mushroom.obj successfully imported</div>
<!-- Finder tooltip -->
<div class="abs" style="left:540px;top:1398px;width:134px;height:50px;background:#c6c7c9;border-radius:9px"></div>
<div class="t" style="left:567px;top:1409px;font-size:28px;line-height:30px;color:#1c1c1c">Finder</div>

</body></html>
